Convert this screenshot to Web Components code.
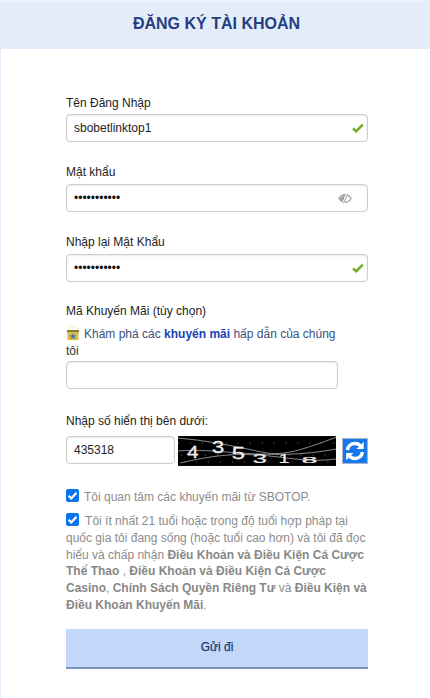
<!DOCTYPE html>
<html lang="vi"><head><meta charset="utf-8"><title>Đăng ký</title>
<style>html,body{margin:0;padding:0;background:#fff;font-family:"Liberation Sans",Arial,sans-serif;color:#222}</style>
</head><body>
<reg-page>
  <reg-field label="Tên Đăng Nhập" value="sbobetlinktop1" icon="check" style="--after:23px;--gap:4px"></reg-field>
  <reg-field label="Mật khẩu" value="•••••••••••" icon="eye" masked style="--after:23px;--gap:5px"></reg-field>
  <reg-field label="Nhập lại Mật Khẩu" value="•••••••••••" icon="check" masked style="--after:22px;--gap:5px"></reg-field>
  <promo-field></promo-field>
  <captcha-row></captcha-row>
  <reg-check>Tôi quan tâm các khuyến mãi từ SBOTOP.</reg-check>
  <reg-terms></reg-terms>
  <reg-submit>Gửi đi</reg-submit>
</reg-page>
<script>
const el=(name,html)=>customElements.define(name,class extends HTMLElement{
  constructor(){super();this.attachShadow({mode:'open'})}
  connectedCallback(){this.shadowRoot.innerHTML=typeof html==='function'?html(this):html}
});
const box=`display:flex;align-items:center;box-sizing:border-box;height:28px;border:1px solid #ccc;border-radius:4px;background:#fff;box-shadow:inset 0 1px 2px rgba(0,0,0,.09);padding:0 7px;font-size:12px;color:#222`;
el('reg-page',`<style>
:host{display:flex;flex-direction:column;width:430px;height:698px;overflow:hidden;box-sizing:border-box;font-family:"Liberation Sans",Arial,sans-serif}
header{flex:none;height:49px;box-sizing:border-box;background:#e4ebf9;border-top:1px solid #eef2fb;display:flex;align-items:center;justify-content:center;padding:0 0 2px 3px;font-size:16px;font-weight:700;color:#233f80}
main{flex:1;display:flow-root;padding:47px 62px 0 65px;border-left:1px solid #e4ebf9}
</style><header>ĐĂNG KÝ TÀI KHOẢN</header><main><slot></slot></main>`);
el('reg-field',h=>{
 const icon=h.getAttribute('icon');
 const svg=icon==='check'
  ?`<svg width="12" height="10" viewBox="0 0 12 10"><path d="M1 5.300 4.200 8.300 10.800 1.700" fill="none" stroke="#72ab1d" stroke-width="2.500"/></svg>`
  :`<svg width="14" height="11" viewBox="0 0 14 11"><path d="M.8 5.500C2.500 2.800 4.600 1.600 7 1.600s4.500 1.200 6.200 3.900C11.500 8.200 9.400 9.400 7 9.400S2.500 8.200.8 5.500Z" fill="none" stroke="#9a9a9a" stroke-width="1.100"/><path d="M1.800 5.500 6.800 1.800 6.200 9.200C4.500 9 3 7.500 1.800 5.500Z" fill="#9a9a9a"/><path d="M9.500.8 5.200 10.200" stroke="#fff" stroke-width="2.200"/><path d="M9.800.8 5.500 10.200" stroke="#9a9a9a" stroke-width="1"/></svg>`;
 return `<style>:host{display:block;margin-bottom:var(--after)}
 label{display:block;font-size:12px;line-height:14px;margin-bottom:var(--gap);color:#222}
 .b{${box};justify-content:space-between;padding-right:${icon==='check'?'3px':'15px'}}
 .m{font-size:12px;color:#111}
 svg{display:block}</style>
 <label>${h.getAttribute('label')}</label><div class="b"><span class="${h.hasAttribute('masked')?'m':''}">${h.getAttribute('value')}</span>${svg}</div>`});
el('promo-field',`<style>:host{display:block;margin-bottom:25px;font-size:12px}
.l{line-height:14px;margin-bottom:7px;color:#222}
.p{line-height:17px;width:272px;color:#333;margin-bottom:1px}
.p svg{vertical-align:-2px;margin-right:4px}
b{color:#1a3fb5}
.i{${box};width:272px}</style>
<div class="l">Mã Khuyến Mãi (tùy chọn)</div>
<div class="p"><svg width="14" height="15" viewBox="0 0 14 15"><path d="M6 0v2M3 2v2M9 1v2M11.500 3v1" stroke="#efdc8a"/><rect x="1" y="5" width="12" height="2.500" fill="#8f7d2f"/><rect x="1.500" y="7.500" width="11" height="7.500" fill="#dcb93f"/><path d="M7 8.200 8 10.200 10 10.500 8.500 12 9 14 7 13 5 14 5.500 12 4 10.500 6 10.200Z" fill="#3f75cc"/></svg><span style="color:#3a4f7a">Khám phá các</span> <b>khuyến mãi</b> <span style="color:#3a4f7a">hấp dẫn của chúng</span><br>tôi</div>
<div class="i"></div>`);
el('captcha-row',`<style>:host{display:block;margin-bottom:23px;font-size:12px}
.l{line-height:14px;margin-bottom:8px;color:#222}
.r{display:flex;align-items:flex-start}
.i{${box};width:109px;margin-right:3px}
.c{display:block;width:159px;height:30px;margin-right:6px}
.f{display:block;width:26px;height:26px;margin-top:2px}</style>
<div class="l">Nhập số hiển thị bên dưới:</div>
<div class="r"><div class="i">435318</div>
<svg class="c" viewBox="0 0 159 30"><rect width="159" height="30" fill="#000"/>
<g fill="none" stroke="#aaa" stroke-width=".8"><path d="M0 2C25 4 45 8 70 13S100 24 159 1"/><path d="M2 27C30 21 50 17 80 19S130 27 159 23"/><path d="M0 15C40 11 90 26 159 13"/></g>
<g stroke="#777" stroke-dasharray="1 11" fill="none"><path d="M0 7H159M3 19H159M6 26H159"/></g>
<g fill="#eee" stroke="#eee" stroke-width=".3" font-family="Liberation Sans">
<text transform="translate(9 22) scale(1.300 1)" font-size="16">4</text>
<text transform="translate(34 17) scale(1.300 1)" font-size="17">3</text>
<text transform="translate(54 23) scale(1.500 1)" font-size="16">5</text>
<text transform="translate(75 27.500) scale(1.600 .8)" font-size="16">3</text>
<text transform="translate(101 27) scale(1.300 .8)" font-size="15">1</text>
<text transform="translate(124 27.500) scale(1.800 .6)" font-size="16">8</text></g></svg>
<svg class="f" viewBox="0 0 26 26"><rect x=".5" y=".5" width="25" height="25" fill="#1577ee" stroke="#aab4c4"/>
<g fill="none" stroke="#fff" stroke-width="3.400"><path d="M5.500 12C6 8 9 5.500 13 5.500c2.500 0 4.500 1 5.800 2.700"/><path d="M20.500 14C20 18 17 20.500 13 20.500c-2.500 0-4.500-1-5.800-2.700"/></g>
<path d="M21.800 3.800V11h-7.200ZM4.200 22.200V15h7.200Z" fill="#fff"/></svg></div>`);
const cb=`<svg class="x" width="13" height="13" viewBox="0 0 13 13"><rect width="13" height="13" rx="2" fill="#0a75ec"/><path d="M2.600 6.800 5.300 9.400 10.500 3.700" fill="none" stroke="#fff" stroke-width="2.200"/></svg>`;
el('reg-check',`<style>:host{display:flex;align-items:flex-start;gap:5px;font-size:12px;color:#8c8c8c;line-height:14px;margin-bottom:9px}
span{padding-top:1px}</style>${cb}<span><slot></slot></span>`);
el('reg-terms',`<style>:host{display:block;font-size:12px;line-height:16.8px;color:#8c8c8c;margin-bottom:15px;width:302px}
.x{vertical-align:-1px;margin-right:3px}b{color:#888}</style>${cb} Tôi ít nhất 21 tuổi hoặc trong độ tuổi hợp pháp tại quốc gia tôi đang sống (hoặc tuổi cao hơn) và tôi đã đọc hiểu và chấp nhận <b>Điều Khoản và Điều Kiện Cá Cược Thể Thao</b> , <b>Điều Khoản và Điều Kiện Cá Cược Casino</b>, <b>Chính Sách Quyền Riêng Tư</b> và <b>Điều Kiện và Điều Khoản Khuyến Mãi</b>.`);
el('reg-submit',`<style>:host{display:flex;align-items:center;justify-content:center;box-sizing:border-box;width:302px;height:40px;padding:0 0 2px 0;background:#c3d8f9;border-bottom:2px solid #7c95bf;color:#213c73;font-size:12px;font-weight:400;-webkit-text-stroke:.25px #213c73}</style><slot></slot>`);
</script></body></html>
